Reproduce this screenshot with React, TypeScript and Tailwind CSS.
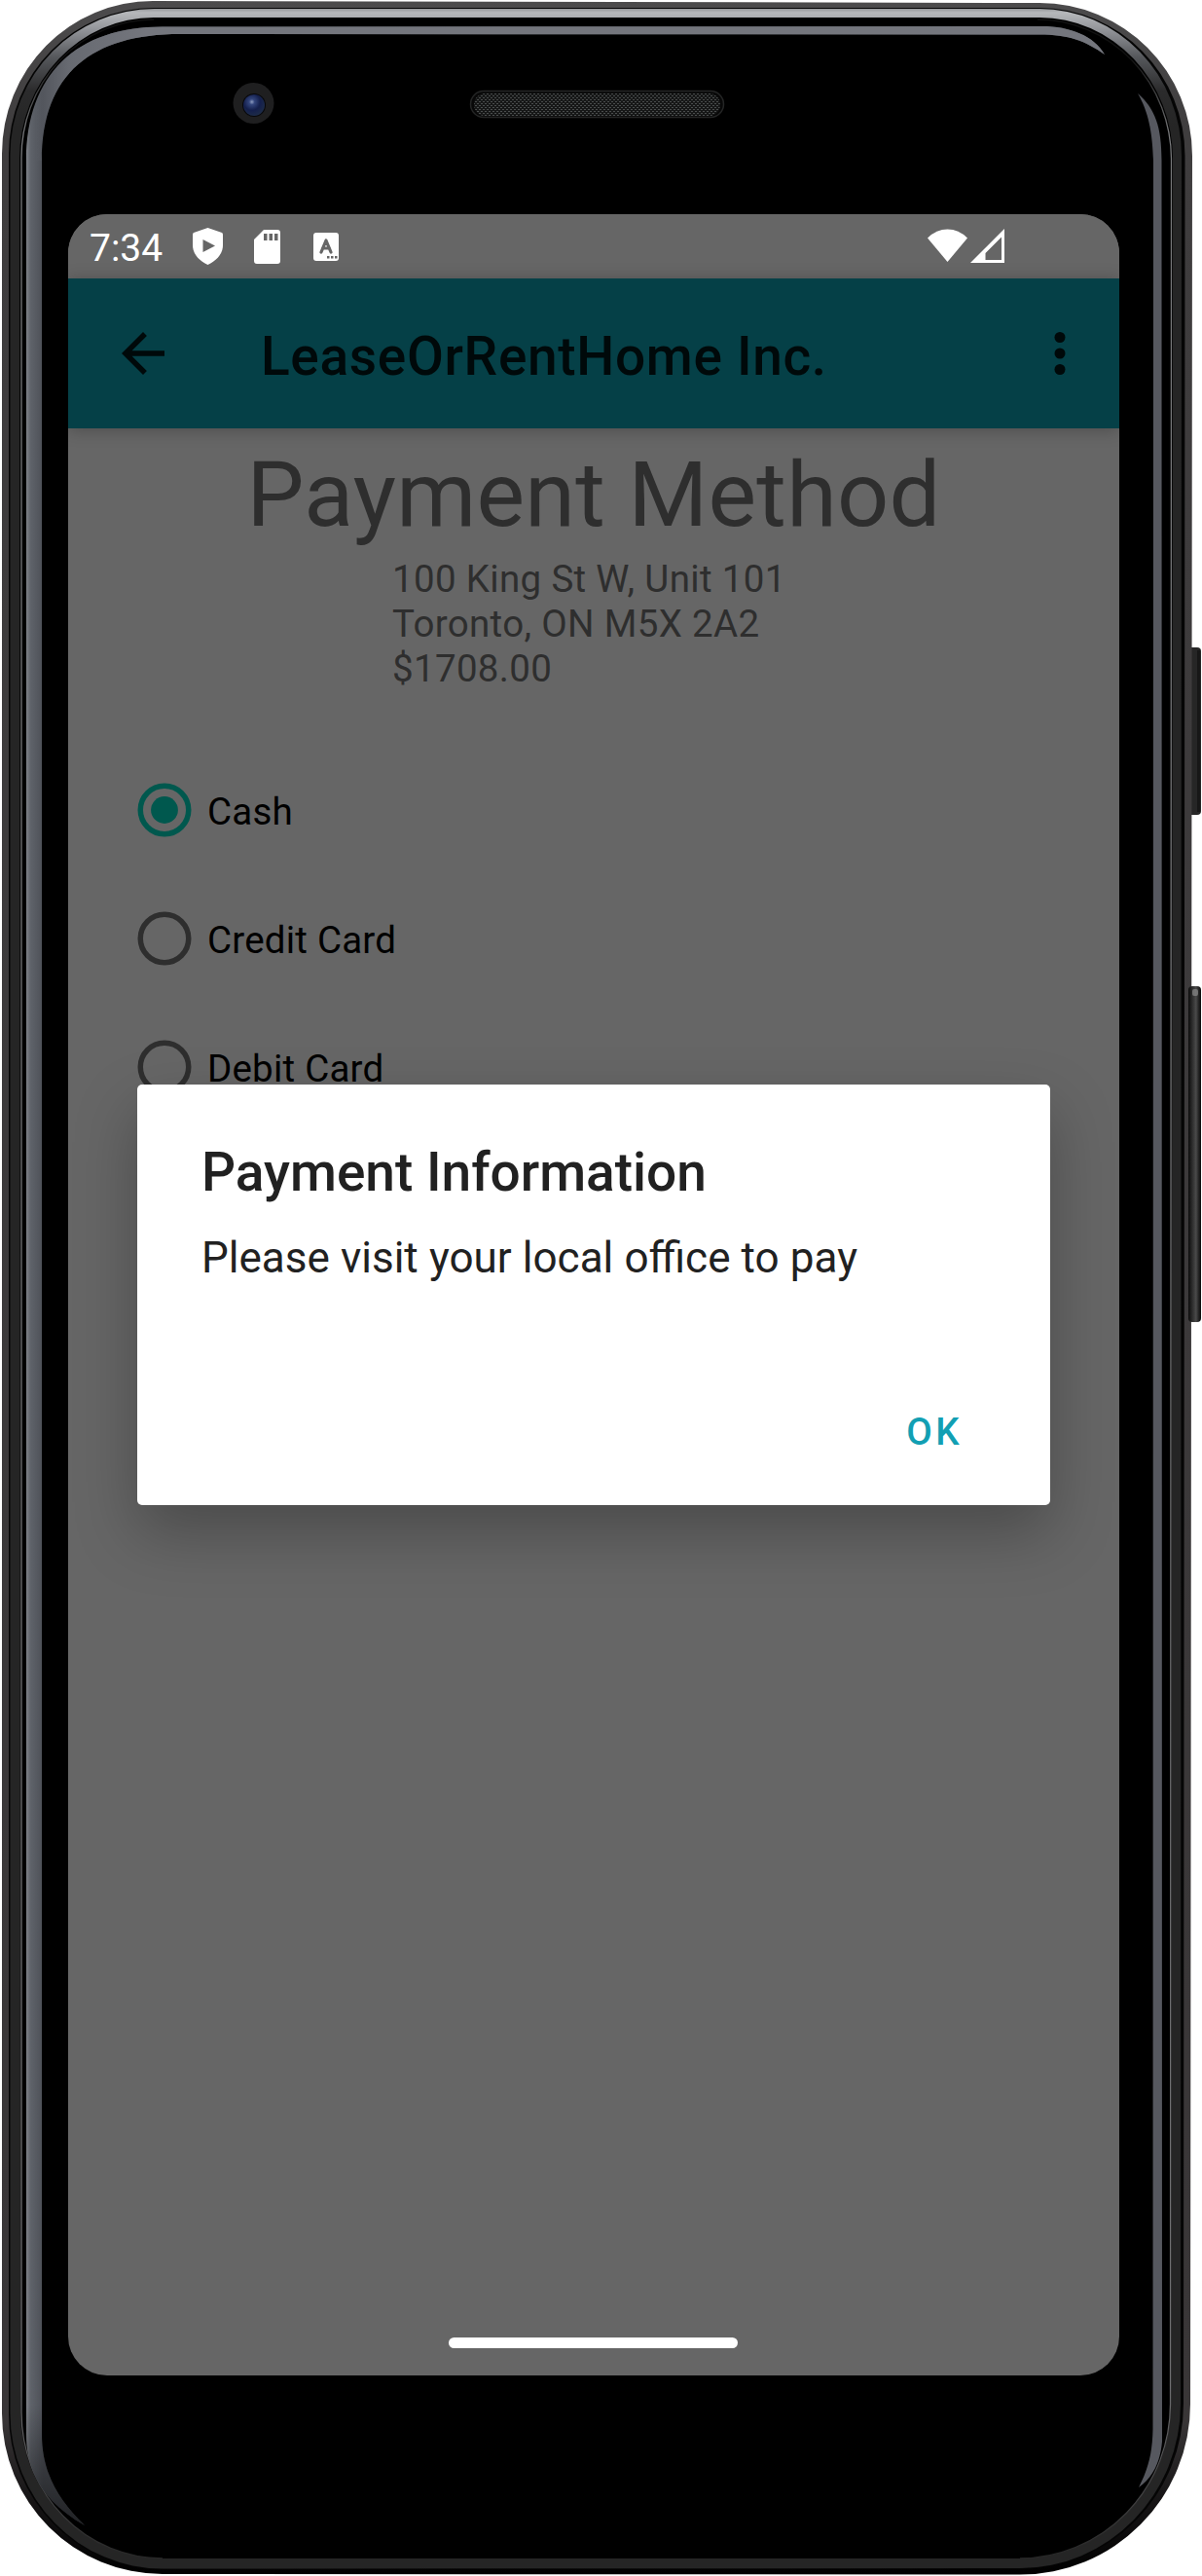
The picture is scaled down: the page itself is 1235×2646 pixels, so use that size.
import React from "react";

function PhoneFrame() {
  return (
    <svg className="absolute inset-0 h-[2646px] w-[1235px]" viewBox="0 0 1235 2646" aria-hidden="true">
      <defs>
        <linearGradient id="shell" x1="0" y1="0" x2="0" y2="1">
          <stop offset="0" stopColor="#4c4b4c" />
          <stop offset="0.05" stopColor="#3f3d3e" />
          <stop offset="0.94" stopColor="#393637" />
          <stop offset="0.97" stopColor="#171516" />
          <stop offset="1" stopColor="#000000" />
        </linearGradient>
        <linearGradient id="bevel" gradientUnits="userSpaceOnUse" x1="0" y1="8" x2="0" y2="130">
          <stop offset="0" stopColor="#8b8d90" />
          <stop offset="0.04" stopColor="#b6b8bb" />
          <stop offset="0.2" stopColor="#8e9095" />
          <stop offset="0.42" stopColor="#55575b" />
          <stop offset="0.7" stopColor="#2b2b2c" />
          <stop offset="1" stopColor="#252525" />
        </linearGradient>
        <linearGradient id="rim" gradientUnits="userSpaceOnUse" x1="0" y1="60" x2="0" y2="2630">
          <stop offset="0" stopColor="#111111" />
          <stop offset="0.03" stopColor="#77787a" />
          <stop offset="0.93" stopColor="#6e6e70" />
          <stop offset="1" stopColor="#262626" />
        </linearGradient>
        <linearGradient id="leftGlow" gradientUnits="userSpaceOnUse" x1="26" y1="0" x2="44" y2="0">
          <stop offset="0" stopColor="#86898f" />
          <stop offset="0.3" stopColor="#5f636a" />
          <stop offset="1" stopColor="#4d5057" />
        </linearGradient>
        <linearGradient id="topGlow" gradientUnits="userSpaceOnUse" x1="36" y1="0" x2="150" y2="0">
          <stop offset="0" stopColor="#6a6d74" stopOpacity="0" />
          <stop offset="0.3" stopColor="#6a6d74" stopOpacity="0.9" />
          <stop offset="1" stopColor="#74767d" />
        </linearGradient>
        <linearGradient id="tailFade" gradientUnits="userSpaceOnUse" x1="0" y1="2470" x2="0" y2="2600">
          <stop offset="0" stopColor="#000" stopOpacity="0" />
          <stop offset="1" stopColor="#000" stopOpacity="0.6" />
        </linearGradient>
        <linearGradient id="button" x1="0" y1="0" x2="1" y2="0">
          <stop offset="0" stopColor="#0c0c0c" />
          <stop offset="0.3" stopColor="#2c2c2c" />
          <stop offset="0.6" stopColor="#4a4a4a" />
          <stop offset="0.8" stopColor="#262626" />
          <stop offset="1" stopColor="#0a0a0a" />
        </linearGradient>
        <radialGradient id="lens" cx="0.4" cy="0.35" r="0.65">
          <stop offset="0" stopColor="#8e9cc0" />
          <stop offset="0.2" stopColor="#33457c" />
          <stop offset="0.6" stopColor="#141f4c" />
          <stop offset="1" stopColor="#1d2b48" />
        </radialGradient>
        <pattern id="mesh" width="4" height="4" patternUnits="userSpaceOnUse">
          <rect width="4" height="4" fill="#161717" />
          <rect width="2" height="1" fill="#4a4d4d" />
          <rect x="2" y="2" width="2" height="1" fill="#4a4d4d" />
        </pattern>
      </defs>

      {/* power button */}
      <rect x="1219" y="665" width="15" height="172" rx="4" fill="#262626" />
      <rect x="1230" y="668" width="3" height="166" fill="#171717" />

      {/* body, groove, bevel and glass */}
      <path d="M2 158A155 157 0 0 1 157 1L1068 3A157 157 0 0 1 1225 160L1223 2469A175 175 0 0 1 1048 2644.500L167 2644A165 165 0 0 1 2 2479Z" fill="url(#shell)" />
      <path d="M9 158A149 150 0 0 1 158 8L1068 8A150 152 0 0 1 1217.500 160L1216 2469A168 170 0 0 1 1048 2639L167 2639.500A158 160 0 0 1 9 2479Z" fill="#050505" />
      <path d="M10.500 159A148 150 0 0 1 158.500 9L1068 9A146 151 0 0 1 1214 160L1213 2469A165 169 0 0 1 1048 2638L167 2638.500A156.500 160 0 0 1 10.500 2479Z" fill="url(#bevel)" />
      <path d="M20 163A138 145 0 0 1 158 18L1068 18A137 145 0 0 1 1205 163L1203 2469A155 158.500 0 0 1 1048 2628L167 2628A146 150 0 0 1 21 2478Z" fill="#000000" />
      <path d="M22 163A136 142 0 0 1 158 20M1066 20A137.500 144 0 0 1 1203.500 163L1202.500 2469A155 158.500 0 0 1 1048 2628M167 2628A145 150 0 0 1 22 2478L22 163" fill="none" stroke="url(#rim)" strokeWidth="1.300" />

      {/* reflections along the glass edge */}
      <path d="M27 165C27 75 80 27 168 27.500L1070 27C1100 27 1124 37 1135 56C1115 42 1098 35.500 1068 35.500L185 35C95 35 43 75 43 165L43 2500C43 2540 60 2568 87 2594C45 2570 27 2540 27 2500Z" fill="url(#leftGlow)" />
      <path d="M27 165C27 75 80 27 168 27.500L1070 27C1100 27 1124 37 1135 56C1115 42 1098 35.500 1068 35.500L185 35C95 35 43 75 43 165Z" fill="url(#topGlow)" />
      <path d="M43 2470L43 2500C43 2540 60 2568 87 2594C45 2570 27 2540 27 2500L27 2470Z" fill="url(#tailFade)" />
      <path d="M1169 96C1187 112 1193.500 130 1193.500 165L1194 2508C1192 2530 1184 2545 1170 2555C1180 2535 1184 2520 1184.500 2495L1185 165C1184 135 1180 115 1169 96Z" fill="#56585f" />

      {/* volume rocker */}
      <rect x="1221" y="1013" width="13" height="345" rx="4" fill="url(#button)" />
      <rect x="1225" y="1016" width="6" height="7" rx="2" fill="#8a8a8a" opacity="0.7" />

      {/* front camera */}
      <circle cx="260.500" cy="106" r="21" fill="#1f1f20" />
      <circle cx="261" cy="108" r="12" fill="#08080b" />
      <circle cx="261" cy="108" r="11" fill="url(#lens)" />

      {/* earpiece */}
      <rect x="483.500" y="93.500" width="260" height="27" rx="13.500" fill="#080808" stroke="#242525" strokeWidth="1.500" />
      <rect x="487" y="96" width="253" height="23" rx="11.500" fill="url(#mesh)" />
    </svg>
  );
}

function StatusBar() {
  return (
    <div className="flex h-[66px] items-start bg-[#666666] pl-[22px] text-white">
      <span className="w-[106px] pt-[13px] text-[39px] leading-[44px]">7:34</span>
      <svg className="mt-[14px] h-[38px] w-[31px]" viewBox="0 0 31 38" fill="currentColor">
        <path fillRule="evenodd" d="M15.500 0L30 5Q31 5.500 31 7V18C31 27 24 34 15.500 38C7 34 0 27 0 18V7Q0 5.500 1 5ZM10.500 12V25L23 18.500Z" />
      </svg>
      <svg className="mt-[16px] ml-[32px] h-[35px] w-[27px]" viewBox="0 0 27 35" fill="currentColor">
        <path fillRule="evenodd" d="M10 0H24Q27 0 27 3V32Q27 35 24 35H3Q0 35 0 32V10ZM10 4V11H13.500V4ZM15.500 4V11H19V4ZM21 4V11H24.500V4Z" />
      </svg>
      <svg className="mt-[19px] ml-[34px] h-[29px] w-[26px]" viewBox="0 0 26 29">
        <rect width="26" height="29" rx="3" fill="#fff" />
        <path d="M8 20L13 8L18 20M9.500 16H16.500" fill="none" stroke="#666666" strokeWidth="3.200" strokeLinecap="round" strokeLinejoin="round" />
        <path d="M14 24h2.500v2.500H14zM18 24h2.500v2.500H18zM22 24h2.500v2.500H22z" fill="#666666" />
      </svg>
      <svg className="mt-[15px] ml-[605px] h-[34px] w-[41px]" viewBox="0 0 41 34" fill="currentColor">
        <path d="M20.500 34L0 9.500Q9 0.500 20.500 0.500T41 9.500Z" />
      </svg>
      <svg className="mt-[15px] ml-[3px] h-[35px] w-[35px]" viewBox="0 0 35 35" fill="currentColor">
        <path fillRule="evenodd" d="M35 0V35H0ZM15.500 32H32V8.500L15.500 25Z" />
      </svg>
    </div>
  );
}

function AppBar() {
  return (
    <header className="relative flex h-[154px] items-center bg-[#054047] pr-[28px] pl-[44px] text-[#00090a] shadow-[0_2px_16px_rgba(0,0,0,0.25)]">
      <svg className="size-[66px]" viewBox="0 0 24 24" fill="currentColor">
        <path d="M20 11H7.830l5.590-5.590L12 4l-8 8 8 8 1.410-1.410L7.830 13H20v-2z" />
      </svg>
      <h1 className="ml-[88px] grow pt-[6px] text-[55px] leading-[64px] font-medium tracking-[0.67px]">LeaseOrRentHome Inc.</h1>
      <svg className="size-[66px]" viewBox="0 0 24 24" fill="currentColor">
        <circle cx="12" cy="6" r="2" />
        <circle cx="12" cy="12" r="2" />
        <circle cx="12" cy="18" r="2" />
      </svg>
    </header>
  );
}

function RadioRow({ label, checked }: { label: string; checked?: boolean }) {
  return (
    <label className="flex h-[132px] items-center pl-[71px]">
      <svg className={checked ? "size-[56px] text-[#00584e]" : "size-[56px] text-[#2e2e2e]"} viewBox="0 0 56 56">
        <circle cx="28" cy="28" r="24.750" fill="none" stroke="currentColor" strokeWidth="5.500" />
        {checked && <circle cx="28" cy="28" r="13.900" fill="currentColor" />}
      </svg>
      <span className="pt-[4px] pl-[16px] text-[38.5px] leading-[46px] tracking-[0.22px] text-black">{label}</span>
    </label>
  );
}

function PaymentDialog() {
  return (
    <div
      role="dialog"
      className="absolute top-[894px] left-[71px] flex h-[432px] w-[938px] flex-col rounded-[5px] bg-white pt-[58px] pr-[90px] pl-[66px] text-[#212121] shadow-[0_28px_64px_rgba(0,0,0,0.27)]"
    >
      <h2 className="text-[55px] leading-[64px] font-medium">Payment Information</h2>
      <p className="mt-[30px] text-[44px] leading-[52px] [word-spacing:0.25px]">Please visit your local office to pay</p>
      <button className="mt-[131px] self-end text-[38.5px] leading-[44px] font-medium tracking-[3.4px] text-[#129fb3]">OK</button>
    </div>
  );
}

export default function App() {
  return (
    <div className="relative h-[2646px] w-[1235px] overflow-hidden bg-white pt-[220px] pl-[70px] font-['Roboto',sans-serif]">
      <PhoneFrame />
      <main className="relative flex h-[2220px] w-[1080px] flex-col overflow-hidden rounded-[40px] bg-[#666666]">
        <StatusBar />
        <AppBar />
        <h2 className="mt-[13px] text-center text-[93.5px] leading-[110px] tracking-[0.27px] text-[#2e2e2e]">Payment Method</h2>
        <div className="mt-[9px] w-[414px] self-center text-[38.5px] leading-[46px] tracking-[0.33px] text-[#2e2e2e]">
          <p>100 King St W, Unit 101</p>
          <p>Toronto, ON M5X 2A2</p>
          <p>$1708.00</p>
        </div>
        <div className="mt-[56px]">
          <RadioRow label="Cash" checked />
          <RadioRow label="Credit Card" />
          <RadioRow label="Debit Card" />
        </div>
        <div className="absolute bottom-[28px] left-[391px] h-[11px] w-[297px] rounded-full bg-white" />
        <PaymentDialog />
      </main>
    </div>
  );
}
